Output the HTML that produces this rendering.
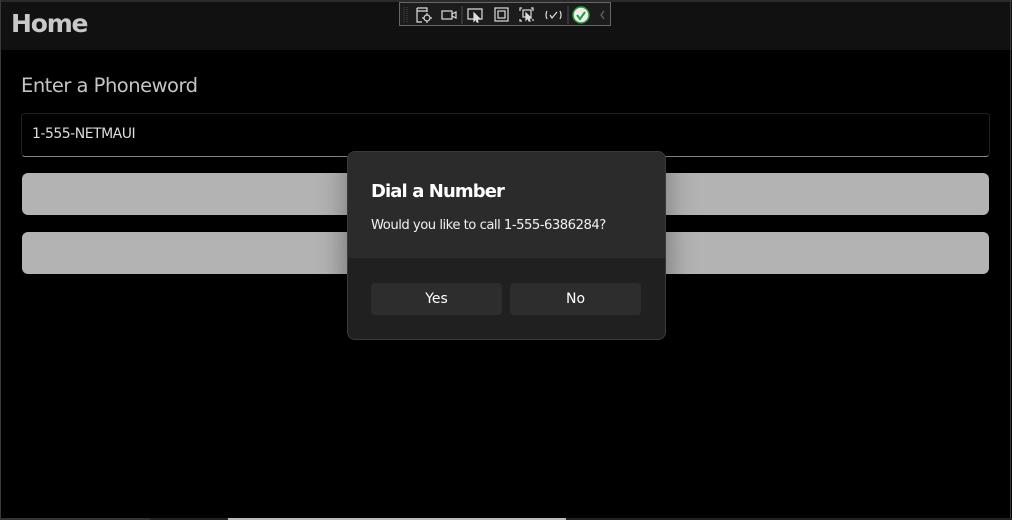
<!DOCTYPE html>
<html><head><style>
*{margin:0;padding:0;box-sizing:border-box}
body{width:1012px;height:520px;background:#000;position:relative;overflow:hidden;font-family:"Liberation Sans","DejaVu Sans",sans-serif}
.hdr{position:absolute;left:0;top:0;width:1012px;height:50px;background:#111;border-top:2px solid #2a2a2a}
.hdr h1{position:absolute;left:11px;top:7px;font-size:25px;color:#c8c8c8;font-weight:bold;font-family:"DejaVu Sans",sans-serif;letter-spacing:-1.2px}
.vl{position:absolute;top:0;bottom:2px;width:1px;background:#3a3a3a}
.lbl{position:absolute;left:21px;top:74px;font-size:19.5px;color:#c4c4c4;font-family:"DejaVu Sans",sans-serif;letter-spacing:-0.5px}
.entry{position:absolute;left:21px;top:113px;width:969px;height:44px;border:1px solid #1e1e1e;border-bottom:1px solid #888;border-radius:4px}
.entry span{position:absolute;left:10px;top:12px;font-size:14px;color:#ddd;font-family:"DejaVu Sans",sans-serif;letter-spacing:-0.5px}
.btn{position:absolute;left:22px;width:967px;height:42px;background:#b3b3b3;border-radius:6px}
.shade{position:absolute;left:320px;top:140px;width:370px;height:230px;background:radial-gradient(ellipse at center,rgba(0,0,0,.25),rgba(0,0,0,0) 70%)}
.dlg{position:absolute;left:347px;top:151px;width:319px;height:189px;background:#202020;border:1px solid #3a3a3a;border-radius:8px;overflow:hidden;box-shadow:0 0 30px rgba(0,0,0,.35)}
.top{height:106px;background:#2b2b2b}
.dlg h2{position:absolute;left:23px;top:29px;font-size:18px;color:#fff;font-weight:bold;font-family:"DejaVu Sans",sans-serif;letter-spacing:-0.9px}
.dlg p{position:absolute;left:23px;top:66px;font-size:13.2px;color:#f0f0f0;font-family:"DejaVu Sans",sans-serif;letter-spacing:-0.5px}
.db{position:absolute;top:131px;width:131px;height:32px;background:#2d2d2d;border-radius:4px;color:#fff;font-size:14px;text-align:center;line-height:33px;font-family:"DejaVu Sans",sans-serif}
.tb{position:absolute;left:399px;top:2px;width:212px;height:24px;background:#1c1c1c;border:1px solid #666}
.tb svg{position:absolute;left:0;top:0}
</style></head><body>
<div class="hdr"><h1>Home</h1></div>
<div class="vl" style="left:0"></div><div class="vl" style="left:1010px"></div>
<div class="tb"><svg width="212" height="24" viewBox="0 0 212 24" fill="none" stroke="#ddd" stroke-width="1.2">
<path d="M4 4v16M7 4v16" stroke="#444" stroke-dasharray="1 1"/>
<path d="M17 5h10v4M17 5v14h5M17 8h10"/><circle cx="27" cy="15" r="3"/><path d="M27 10v2M27 18v2M22 15h2M30 15h2"/>
<rect x="42" y="8" width="10" height="8"/><path d="M52 11l4-2v6l-4-2z"/>
<path d="M62 3v18" stroke="#444"/>
<path d="M74 16h-6v-10h14v10h-4"/><path d="M74 10l6 6-3 0 1 3-1 0-1-3-2 2z" fill="#ddd"/>
<rect x="95" y="5" width="13" height="13"/><rect x="98" y="8" width="7" height="7"/>
<path d="M122 5h-2v3M131 5h2v3M120 16v2h2M133 16v2" /><rect x="123" y="7" width="8" height="7"/><path d="M126 10l5 5-2 0 1 3-1 0-1-3-2 2z" fill="#ddd"/>
<path d="M147 8q-2 4 0 8M160 8q2 4 0 8"/><path d="M150 12l2 3 5-6" />
<path d="M168 3v18" stroke="#444"/>
<circle cx="181" cy="12" r="8" fill="#eee" stroke="#2a9a3a" stroke-width="1.5"/><path d="M177 12l3 4 5-7" stroke="#2a9a3a" stroke-width="2"/>
<path d="M204 8l-3 4 3 4" stroke="#666"/>
</svg></div>
<div class="lbl">Enter a Phoneword</div>
<div class="entry"><span>1-555-NETMAUI</span></div>
<div class="btn" style="top:173px"></div>
<div class="btn" style="top:232px"></div>
<div class="shade"></div>
<div class="dlg"><div class="top"></div><h2>Dial a Number</h2><p>Would you like to call 1-555-6386284?</p>
<div class="db" style="left:23px">Yes</div><div class="db" style="left:162px">No</div></div>
<div style="position:absolute;left:0;top:518px;width:150px;height:2px;background:#333"></div>
<div style="position:absolute;left:150px;top:518px;width:862px;height:2px;background:#222"></div>
<div style="position:absolute;left:228px;top:518px;width:338px;height:2px;background:#bbb"></div>
</body></html>
